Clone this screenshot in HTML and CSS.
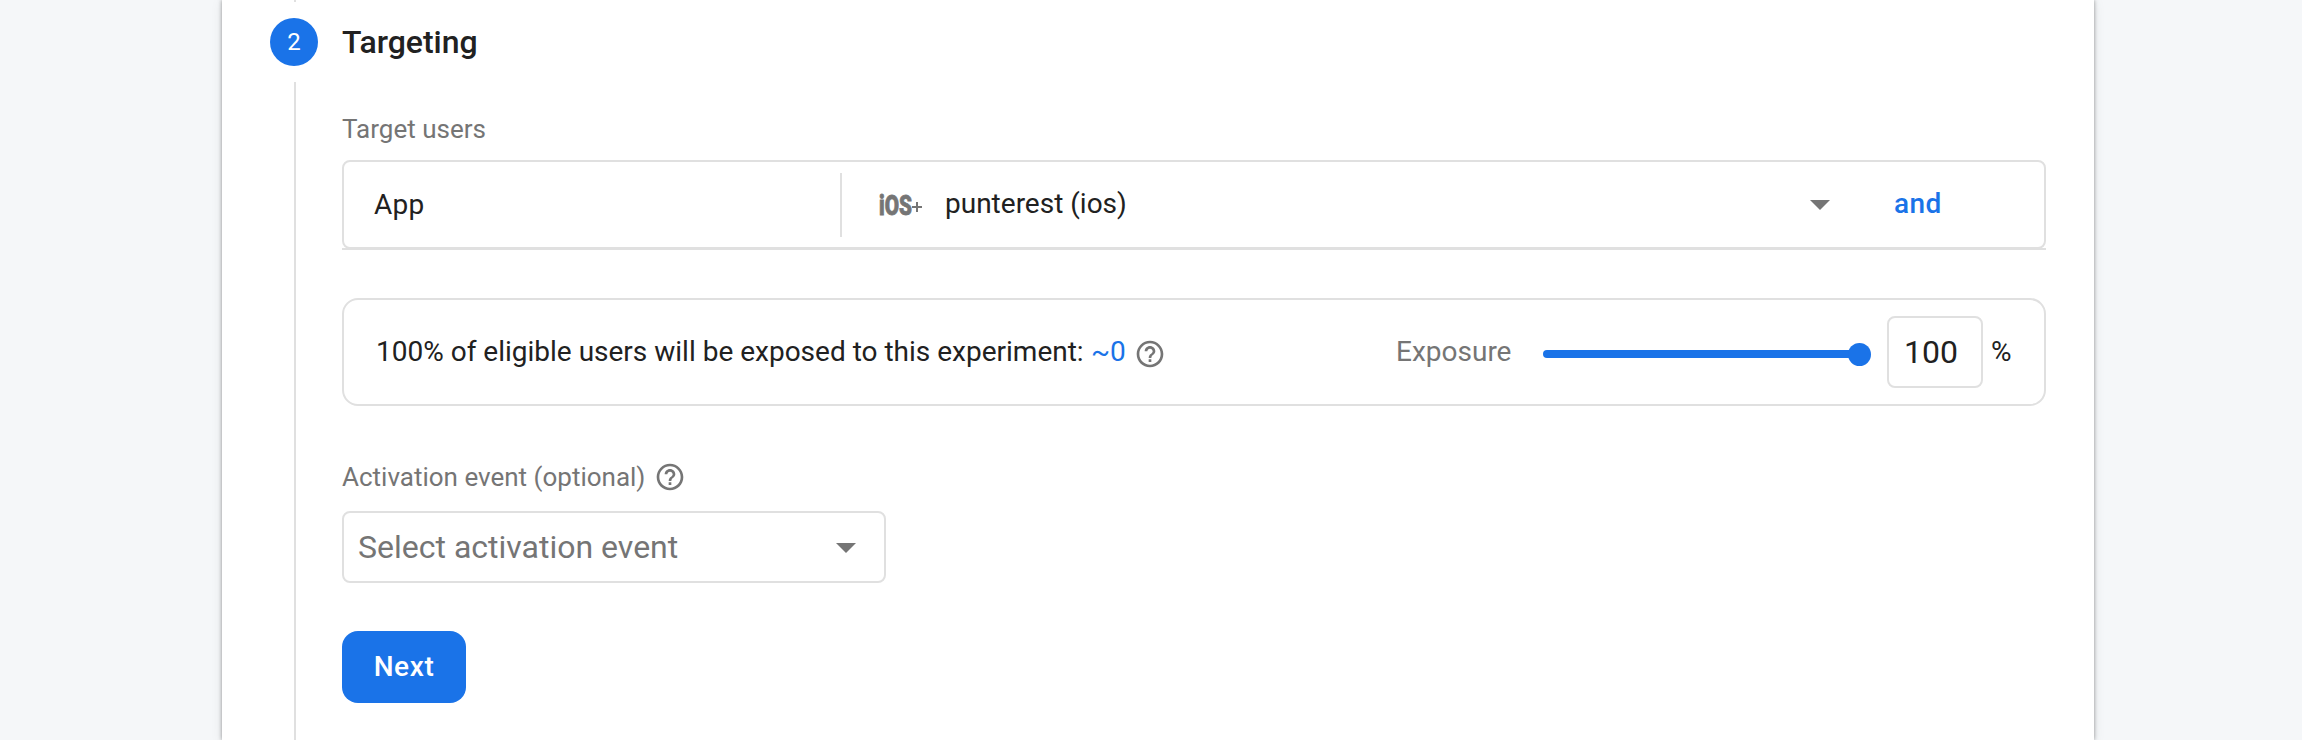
FILE: index.html
```html
<!DOCTYPE html>
<html lang="en">
<head>
<meta charset="utf-8">
<title>Targeting</title>
<link rel="stylesheet" href="styles.css">
</head>
<body>
<main class="card">
  <div class="rail">
    <div class="rail-top"></div>
    <div class="step">2</div>
    <div class="rail-line"></div>
  </div>
  <section class="content">
    <h2 class="title">Targeting</h2>
    <div class="label label-users">Target users</div>
    <div class="users-wrap">
      <div class="users">
        <div class="type">App</div>
        <div class="divider"></div>
        <svg class="ios" width="44" height="36" viewBox="0 -6 44 36" fill="#757575">
          <text x="0" y="21" textLength="33" lengthAdjust="spacingAndGlyphs" class="ios-text">iOS</text>
          <path d="M33 12h4V8h2v4h4v2h-4v4h-2v-4h-4z"/>
        </svg>
        <span class="app-name">punterest (ios)</span>
        <svg class="arrow" width="20" height="10" viewBox="0 0 20 10"><path d="M0 0h20L10 10z" fill="#757575"/></svg>
        <span class="and">and</span>
      </div>
    </div>
    <div class="exposure">
      <span class="sentence">100% of eligible users will be exposed to this experiment:</span>
      <span class="count">~0</span>
      <svg class="help help-count" width="32" height="32" viewBox="0 0 24 24"><path fill="#757575" d="M11 18h2v-2h-2v2zm1-16C6.480 2 2 6.480 2 12s4.480 10 10 10 10-4.480 10-10S17.520 2 12 2zm0 18c-4.410 0-8-3.590-8-8s3.590-8 8-8 8 3.590 8 8-3.590 8-8 8zm0-14c-2.210 0-4 1.790-4 4h2c0-1.100.9-2 2-2s2 .9 2 2c0 2-3 1.750-3 5h2c0-2.250 3-2.500 3-5 0-2.210-1.790-4-4-4z"/></svg>
      <span class="exp-label">Exposure</span>
      <div class="slider"><div class="track"></div><div class="thumb"></div></div>
      <div class="input">100</div>
      <span class="pct">%</span>
    </div>
    <div class="label label-event">Activation event (optional)
      <svg class="help" width="32" height="32" viewBox="0 0 24 24"><path fill="#757575" d="M11 18h2v-2h-2v2zm1-16C6.480 2 2 6.480 2 12s4.480 10 10 10 10-4.480 10-10S17.520 2 12 2zm0 18c-4.410 0-8-3.590-8-8s3.590-8 8-8 8 3.590 8 8-3.590 8-8 8zm0-14c-2.210 0-4 1.790-4 4h2c0-1.100.9-2 2-2s2 .9 2 2c0 2-3 1.750-3 5h2c0-2.250 3-2.500 3-5 0-2.210-1.790-4-4-4z"/></svg>
    </div>
    <div class="select">Select activation event
      <svg class="select-arrow" width="20" height="10" viewBox="0 0 20 10"><path d="M0 0h20L10 10z" fill="#757575"/></svg>
    </div>
    <button class="next">Next</button>
  </section>
</main>
</body>
</html>
```
FILE: styles.css
```css
* { box-sizing: border-box; }
body {
  margin: 0;
  height: 740px;
  overflow: hidden;
  background: #f5f7f9;
  font-family: Roboto, sans-serif;
  font-size: 28px;
  color: #212121;
}
.card {
  display: flex;
  width: 1872px;
  height: 740px;
  margin-left: 222px;
  background: #fff;
  box-shadow: 0 0 4px rgba(0, 0, 0, .4), 0 2px 12px rgba(0, 0, 0, .08);
}
.rail {
  display: flex;
  flex-direction: column;
  width: 48px;
  margin-left: 48px;
}
.rail-top, .rail-line { width: 2px; margin-left: 24px; background: #e0e0e0; }
.rail-top { height: 2px; }
.rail-line { flex: 1; margin-top: 16px; }
.step {
  height: 48px;
  margin-top: 16px;
  border-radius: 50%;
  background: #1a73e8;
  color: #fff;
  font-size: 24px;
  line-height: 48px;
  text-align: center;
}
.content { width: 1704px; margin-left: 24px; white-space: nowrap; }
.title { margin: 18px 0 0; font-size: 32px; font-weight: 500; line-height: 48px; }
.label { display: flex; align-items: center; height: 32px; font-size: 26px; color: #757575; }
.label-users { margin-top: 47px; }
.users-wrap { height: 90px; margin-top: 15px; border-bottom: 2px solid #e0e0e0; }
.users {
  display: flex;
  align-items: center;
  height: 89px;
  border: 2px solid #e0e0e0;
  border-radius: 8px;
}
.type { width: 496px; padding-left: 30px; letter-spacing: .3px; }
.divider { width: 2px; height: 64px; background: #e0e0e0; }
.ios { margin: 2px 0 0 37px; }
.ios-text {
  font-family: Roboto, sans-serif;
  font-weight: 900;
  font-size: 28px;
  stroke: #757575;
  stroke-width: .8px;
}
.app-name { width: 865px; margin-left: 22px; padding-bottom: 2px; }
.and { margin-left: 64px; padding-bottom: 2px; font-weight: 500; letter-spacing: .4px; color: #1a73e8; }
.exposure {
  display: flex;
  align-items: center;
  height: 108px;
  margin-top: 48px;
  padding-left: 32px;
  border: 2px solid #e0e0e0;
  border-radius: 16px;
}
.sentence, .count, .exp-label, .pct { padding-bottom: 1px; }
.sentence { width: 715px; }
.count { width: 43px; color: #1a73e8; }
.help-count { margin-top: 4px; }
.exp-label { width: 147px; margin-left: 230px; color: #757575; }
.slider { display: flex; align-items: center; width: 328px; margin-top: 4px; }
.track { width: 316px; height: 8px; border-radius: 4px; background: #1a73e8; }
.thumb { flex: none; width: 23px; height: 23px; margin-left: -11px; border-radius: 50%; background: #1a73e8; }
.input {
  width: 96px;
  height: 72px;
  margin-left: 16px;
  padding-left: 15px;
  border: 2px solid #e0e0e0;
  border-radius: 8px;
  font-size: 32px;
  line-height: 68px;
}
.pct { margin-left: 8px; }
.label-event { gap: 9px; margin-top: 55px; }
.select {
  display: flex;
  align-items: center;
  justify-content: space-between;
  width: 544px;
  height: 72px;
  margin-top: 18px;
  padding: 0 28px 0 14px;
  border: 2px solid #e0e0e0;
  border-radius: 8px;
  font-size: 32px;
  color: #757575;
}
.select-arrow { margin-top: 2px; }
.next {
  display: block;
  width: 124px;
  height: 72px;
  margin-top: 48px;
  padding: 0;
  border: 0;
  border-radius: 16px;
  background: #1a73e8;
  color: #fff;
  font: 500 28px/72px Roboto, sans-serif;
  letter-spacing: .6px;
}
```
